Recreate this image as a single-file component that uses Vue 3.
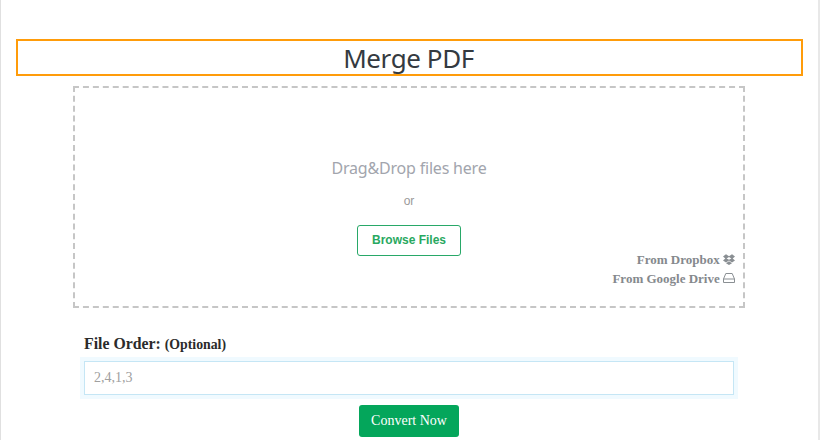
<script setup>
import { ref } from 'vue'

const order = ref('')
</script>

<template>
  <div class="page">
    <h1 class="title">Merge PDF</h1>
    <div class="dropzone">
      <p class="drag">Drag&amp;Drop files here</p>
      <p class="or">or</p>
      <button class="browse">Browse Files</button>
      <div class="sources">
        <a class="source">From Dropbox
          <svg width="12" height="11" viewBox="0 0 12 11">
            <path fill="#8a8f93" fill-rule="evenodd" d="M0 2.4 3 0.2 6 2.2 9 0.2 12 2.4 9.7 4.4 12 6.4 9 8.5 6 6.5 3 8.5 0 6.4 2.3 4.4ZM6 3 3.6 4.4 6 5.8 8.4 4.4ZM3 9.2 6 7.2 9 9.2 6 11Z"/>
          </svg>
        </a>
        <a class="source">From Google Drive
          <svg width="12" height="11" viewBox="0 0 12 11" fill="none" stroke="#8a8f93">
            <path d="M0.5 6 2.8 0.5H9.2L11.5 6V9.5H0.5Z"/>
            <path d="M0.5 6H11.5"/>
          </svg>
        </a>
      </div>
    </div>
    <div class="form">
      <label class="label" for="order">File Order: <span class="optional">(Optional)</span></label>
      <input id="order" v-model="order" class="input" type="text" placeholder="2,4,1,3">
      <button class="convert">Convert Now</button>
    </div>
  </div>
</template>

<style>
html, body {
  margin: 0;
  background: #fff;
}
</style>

<style scoped>
.page {
  box-sizing: border-box;
  width: 820px;
  height: 440px;
  overflow: hidden;
  padding: 39px 16px 0 16px;
  border-left: 1px solid #e0e0e0;
  border-right: 2px solid #e8e8e8;
  font-family: "Liberation Serif", serif;
}

.title {
  box-sizing: border-box;
  height: 37px;
  margin: 0 -1px 10px -1px;
  padding-right: 2px;
  border: 2px solid #ff9c0a;
  font-family: "Noto Sans", sans-serif;
  font-size: 26px;
  font-weight: 400;
  letter-spacing: -0.4px;
  line-height: 34px;
  text-align: center;
  color: #343a40;
}

.dropzone {
  box-sizing: border-box;
  position: relative;
  width: 672px;
  height: 222px;
  margin-left: 56px;
  padding-top: 69px;
  border: 2px dashed #c6c6c6;
  text-align: center;
}

.drag {
  margin: 0;
  font-family: "Noto Sans", sans-serif;
  font-size: 16px;
  letter-spacing: -0.2px;
  line-height: 22px;
  color: #a2a5ad;
}

.or {
  margin: 14px 0 0;
  font-family: "Liberation Sans", sans-serif;
  font-size: 12px;
  line-height: 16px;
  color: #9a9a9a;
}

.browse {
  display: block;
  box-sizing: border-box;
  width: 104px;
  height: 31px;
  margin: 16px auto 0;
  padding: 0 0 1px;
  background: #fff;
  border: 1px solid #28a868;
  border-radius: 3px;
  font-family: "Liberation Sans", sans-serif;
  font-size: 12px;
  font-weight: 700;
  color: #28a860;
}

.sources {
  position: absolute;
  right: 8px;
  bottom: 18px;
  text-align: right;
}

.source {
  display: block;
  font-size: 13px;
  font-weight: 700;
  line-height: 19px;
  color: #85898d;
}

.source svg {
  vertical-align: -1px;
}

.form {
  display: flex;
  flex-direction: column;
  width: 650px;
  margin: 26px 0 0 67px;
}

.label {
  font-size: 15.8px;
  font-weight: 700;
  line-height: 20px;
  color: #2b2b2b;
}

.optional {
  font-size: 13.8px;
}

.input {
  box-sizing: border-box;
  width: 650px;
  height: 34px;
  margin-top: 6px;
  padding: 0 9px;
  border: 1px solid #c5e6f5;
  outline: 4px solid #f0faff;
  font-family: "Liberation Serif", serif;
  font-size: 14px;
  color: #555;
}

.input::placeholder {
  color: #a0a0a0;
  opacity: 1;
}

.convert {
  align-self: center;
  box-sizing: border-box;
  width: 100px;
  height: 32px;
  margin-top: 10px;
  padding: 0;
  background: #04a65b;
  border: none;
  border-radius: 3px;
  font-family: "Liberation Serif", serif;
  font-size: 14px;
  color: #fff;
}
</style>
